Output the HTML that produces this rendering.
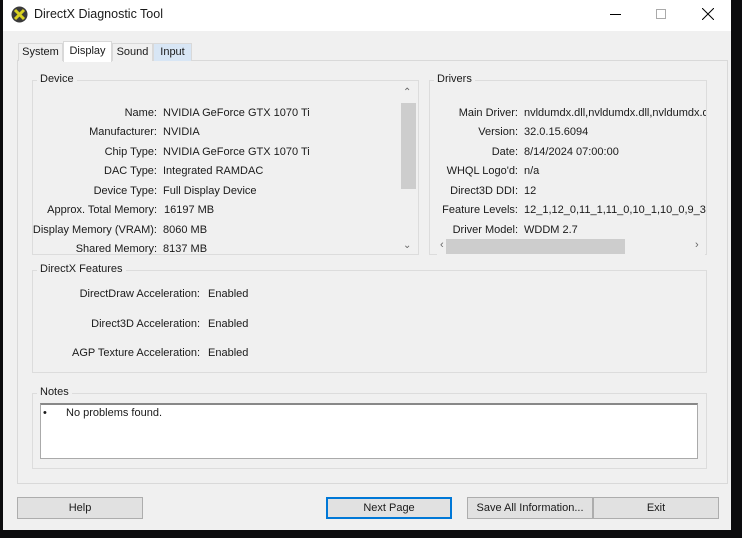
<!DOCTYPE html><html><head><style>
*{margin:0;padding:0;box-sizing:border-box}
body{width:742px;height:538px;background:#0c0c0e;position:relative;overflow:hidden;font-family:"Liberation Sans",sans-serif;font-size:11px;color:#1a1a1a}
.a{position:absolute}
.win{left:3px;top:0;width:728px;height:530px;background:#f0f0f0}
.title{left:3px;top:0;width:728px;height:31px;background:#fff}
.grp{position:absolute;border:1px solid #dcdcdc}
.lg{position:absolute;background:#f0f0f0;padding:0 3px;top:-8px;left:4px}
.l{position:absolute;text-align:right;white-space:nowrap}
.v{position:absolute;white-space:nowrap}
.btn{position:absolute;top:497px;height:22px;background:#e1e1e1;border:1px solid #adadad;text-align:center;line-height:20px}
.tab{position:absolute;top:43px;height:18px;border:1px solid #d9d9d9;border-bottom:none;line-height:17px;text-align:center;background:#f0f0f0}
</style></head><body>
<div class="a win"></div>
<div class="a title"></div>
<svg class="a" style="left:11px;top:6px" width="17" height="17" viewBox="0 0 17 17"><circle cx="8.5" cy="8.5" r="8" fill="#3a3a3a"/><path d="M4 4L13 13M13 4L4 13" stroke="#d8d020" stroke-width="3"/></svg>
<div class="a" style="left:34px;top:7px;font-size:12.5px">DirectX Diagnostic Tool</div>
<div class="a" style="left:610px;top:14px;width:11px;height:1px;background:#000"></div>
<div class="a" style="left:656px;top:9px;width:10px;height:10px;border:1px solid #aaa"></div>
<svg class="a" style="left:702px;top:8px" width="12" height="12"><path d="M0 0L12 12M12 0L0 12" stroke="#000" stroke-width="1"/></svg>
<div class="a" style="left:17px;top:60px;width:711px;height:424px;border:1px solid #d9d9d9;background:#f0f0f0"></div>
<div class="tab" style="left:18px;width:45px">System</div>
<div class="tab" style="left:63px;top:41px;height:21px;width:49px;background:#fff;line-height:18px">Display</div>
<div class="tab" style="left:112px;width:41px">Sound</div>
<div class="tab" style="left:153px;width:39px;background:#d8e6f5">Input</div>

<div class="grp" style="left:32px;top:80px;width:387px;height:175px"><div class="lg">Device</div></div>
<div class="a" style="left:400px;top:88px;width:17px;height:166px;background:#f0f0f0"></div>
<div class="a" style="left:401px;top:103px;width:15px;height:86px;background:#cdcdcd"></div>
<div class="a" style="left:403px;top:87px;color:#666;font-size:10px">⌃</div>
<div class="a" style="left:403px;top:240px;color:#666;font-size:10px">⌄</div>
<div class="grp" style="left:429px;top:80px;width:278px;height:175px"><div class="lg">Drivers</div></div>
<div class="a" style="left:437px;top:238px;width:268px;height:17px;background:#f0f0f0"></div>
<div class="a" style="left:446px;top:239px;width:179px;height:15px;background:#cdcdcd"></div>
<div class="a" style="left:440px;top:239px;color:#666">‹</div>
<div class="a" style="left:695px;top:239px;color:#666">›</div>
<div class="grp" style="left:32px;top:270px;width:675px;height:103px"><div class="lg">DirectX Features</div></div>
<div class="grp" style="left:32px;top:393px;width:675px;height:76px"><div class="lg">Notes</div></div>
<div class="a" style="left:40px;top:403px;width:658px;height:56px;background:#fff;border:1px solid #aaa;border-top:2px solid #888"></div>
<div class="a" style="left:43px;top:407px">•</div>
<div class="a" style="left:66px;top:407px">No problems found.</div>

<div class="l" style="right:585px;top:107px">Name:</div><div class="v" style="left:163px;top:107px">NVIDIA GeForce GTX 1070 Ti</div>
<div class="l" style="right:585px;top:126px">Manufacturer:</div><div class="v" style="left:163px;top:126px">NVIDIA</div>
<div class="l" style="right:585px;top:146px">Chip Type:</div><div class="v" style="left:163px;top:146px">NVIDIA GeForce GTX 1070 Ti</div>
<div class="l" style="right:585px;top:165px">DAC Type:</div><div class="v" style="left:163px;top:165px">Integrated RAMDAC</div>
<div class="l" style="right:585px;top:185px">Device Type:</div><div class="v" style="left:163px;top:185px">Full Display Device</div>
<div class="l" style="right:585px;top:204px">Approx. Total Memory:</div><div class="v" style="left:164px;top:204px">16197 MB</div>
<div class="l" style="right:585px;top:224px">Display Memory (VRAM):</div><div class="v" style="left:163px;top:224px">8060 MB</div>
<div class="l" style="right:585px;top:243px">Shared Memory:</div><div class="v" style="left:163px;top:243px">8137 MB</div>

<div class="l" style="right:224px;top:107px">Main Driver:</div><div class="v" style="left:524px;top:107px;width:182px;overflow:hidden">nvldumdx.dll,nvldumdx.dll,nvldumdx.dll</div>
<div class="l" style="right:224px;top:126px">Version:</div><div class="v" style="left:524px;top:126px">32.0.15.6094</div>
<div class="l" style="right:224px;top:146px">Date:</div><div class="v" style="left:524px;top:146px">8/14/2024 07:00:00</div>
<div class="l" style="right:224px;top:165px">WHQL Logo'd:</div><div class="v" style="left:524px;top:165px">n/a</div>
<div class="l" style="right:224px;top:185px">Direct3D DDI:</div><div class="v" style="left:524px;top:185px">12</div>
<div class="l" style="right:224px;top:204px">Feature Levels:</div><div class="v" style="left:524px;top:204px;width:182px;overflow:hidden">12_1,12_0,11_1,11_0,10_1,10_0,9_3</div>
<div class="l" style="right:224px;top:224px">Driver Model:</div><div class="v" style="left:524px;top:224px">WDDM 2.7</div>

<div class="l" style="right:542px;top:288px">DirectDraw Acceleration:</div><div class="v" style="left:208px;top:288px">Enabled</div>
<div class="l" style="right:542px;top:318px">Direct3D Acceleration:</div><div class="v" style="left:208px;top:318px">Enabled</div>
<div class="l" style="right:542px;top:347px">AGP Texture Acceleration:</div><div class="v" style="left:208px;top:347px">Enabled</div>

<div class="btn" style="left:17px;width:126px">Help</div>
<div class="btn" style="left:326px;width:126px;border:2px solid #0078d7;line-height:18px">Next Page</div>
<div class="btn" style="left:467px;width:126px">Save All Information...</div>
<div class="btn" style="left:593px;width:126px">Exit</div>
</body></html>
